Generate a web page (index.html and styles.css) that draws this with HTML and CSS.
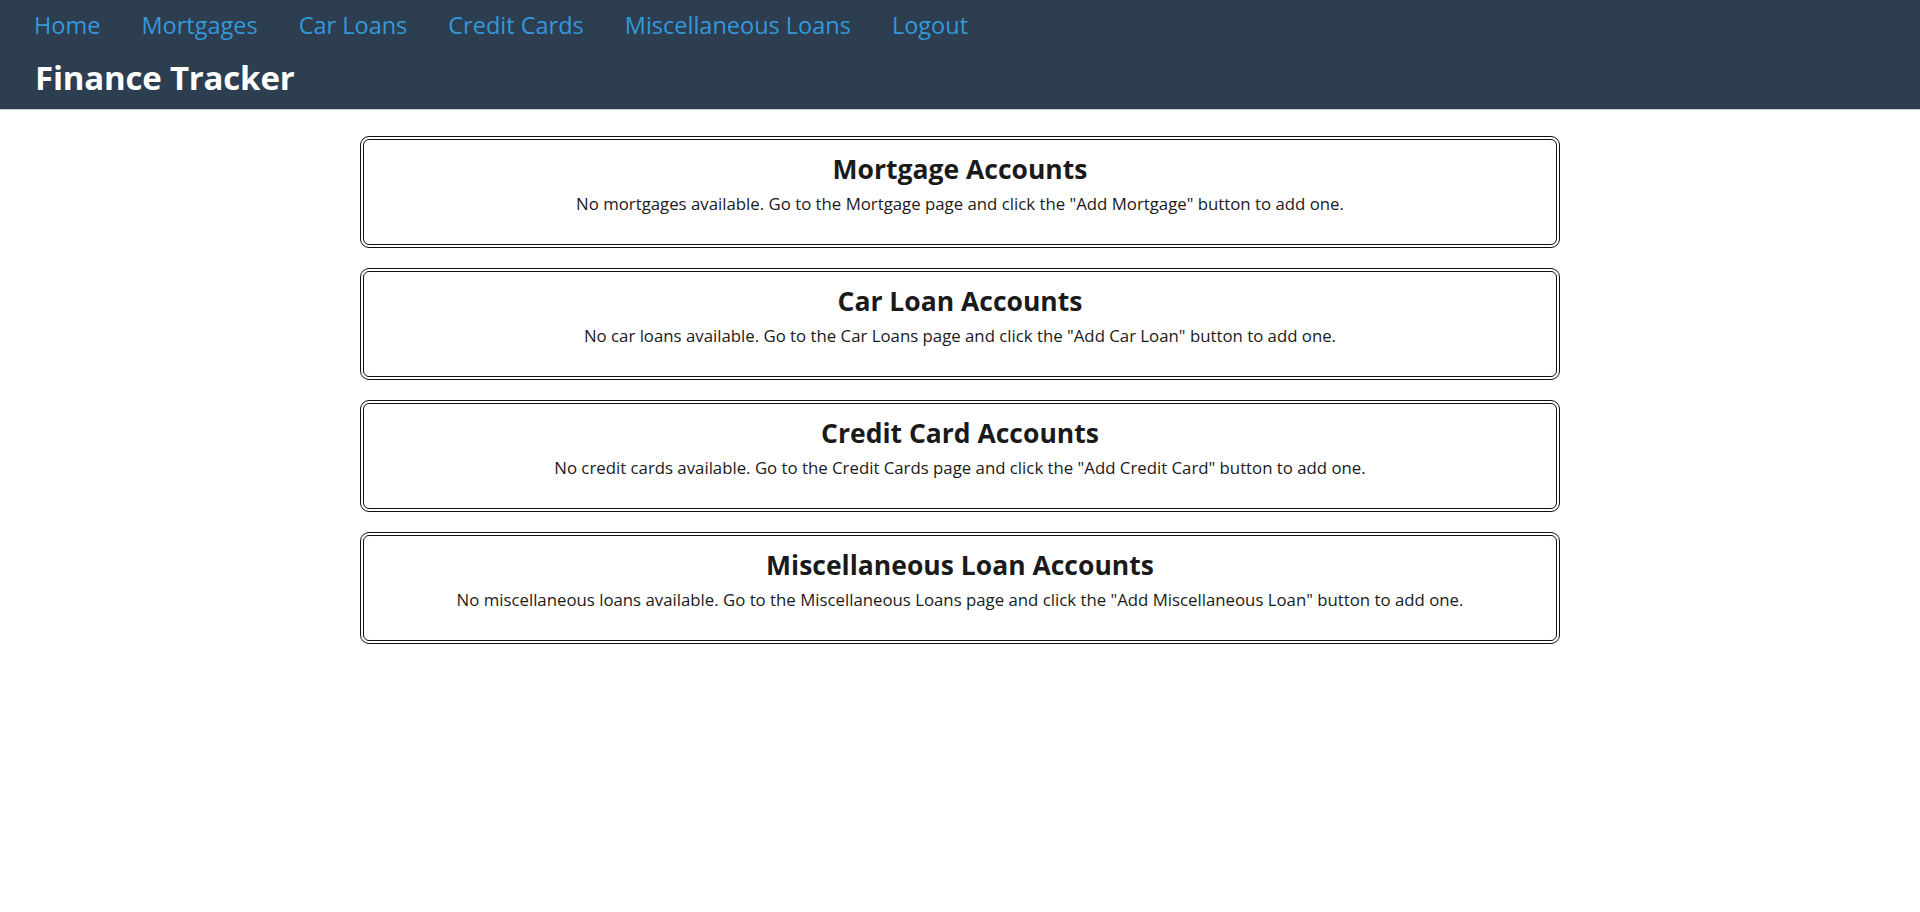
FILE: index.html
```html
<!DOCTYPE html>
<html lang="en">
<head>
<meta charset="utf-8">
<title>Finance Tracker</title>
<link rel="stylesheet" href="styles.css">
</head>
<body>
<header class="site-header">
  <nav class="nav">
    <a href="#" class="nav-link">Home</a>
    <a href="#" class="nav-link">Mortgages</a>
    <a href="#" class="nav-link">Car Loans</a>
    <a href="#" class="nav-link">Credit Cards</a>
    <a href="#" class="nav-link">Miscellaneous Loans</a>
    <a href="#" class="nav-link">Logout</a>
  </nav>
  <h1 class="site-title">Finance Tracker</h1>
</header>
<main class="content">
  <section class="card">
    <h2 class="card-title">Mortgage Accounts</h2>
    <p class="card-text">No mortgages available. Go to the Mortgage page and click the "Add Mortgage" button to add one.</p>
  </section>
  <section class="card">
    <h2 class="card-title">Car Loan Accounts</h2>
    <p class="card-text">No car loans available. Go to the Car Loans page and click the "Add Car Loan" button to add one.</p>
  </section>
  <section class="card">
    <h2 class="card-title">Credit Card Accounts</h2>
    <p class="card-text">No credit cards available. Go to the Credit Cards page and click the "Add Credit Card" button to add one.</p>
  </section>
  <section class="card">
    <h2 class="card-title">Miscellaneous Loan Accounts</h2>
    <p class="card-text">No miscellaneous loans available. Go to the Miscellaneous Loans page and click the "Add Miscellaneous Loan" button to add one.</p>
  </section>
</main>
</body>
</html>
```
FILE: styles.css
```css
* { box-sizing: border-box; }
html, body {
  margin: 0;
  padding: 0;
  background: #ffffff;
  font-family: "Open Sans", "Noto Sans", "Liberation Sans", sans-serif;
  color: #1a1a1a;
}
.site-header {
  background: #2c3e50;
  padding: 3px 34px 0 34px;
  height: 110px;
  border-bottom: 1px solid #c8ccd0;
}
.nav {
  display: flex;
  gap: 41px;
}
.nav-link {
  color: #3498db;
  text-decoration: none;
  font-size: 23.5px;
  line-height: 44px;
}
.site-title {
  margin: 9px 0 0 1px;
  color: #ffffff;
  font-size: 33px;
  font-weight: 700;
  line-height: 44px;
  letter-spacing: -0.2px;
}
.content {
  width: 1200px;
  margin: 26px auto 0 auto;
  display: flex;
  flex-direction: column;
  gap: 20px;
}
.card {
  border: 4px double #111;
  border-radius: 9px;
  height: 112px;
  padding: 11px 20px;
  text-align: center;
}
.card-title {
  margin: 0;
  font-size: 26.5px;
  font-weight: 700;
  line-height: 36px;
  color: #1a1a1a;
}
.card-text {
  margin: 5px 0 0 0;
  font-size: 16.8px;
  line-height: 24px;
  color: #1a1a1a;
}
```
